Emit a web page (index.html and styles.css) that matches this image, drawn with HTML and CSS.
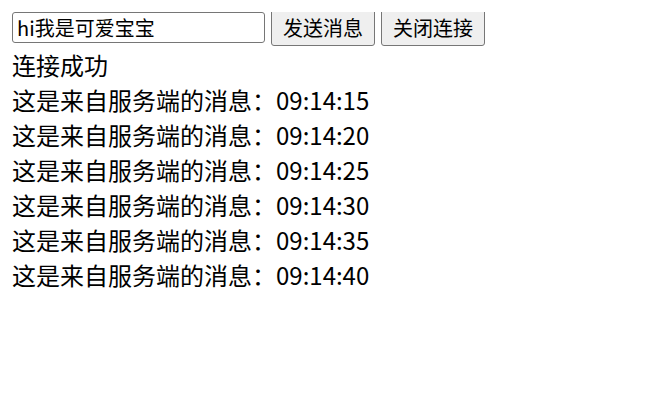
FILE: index.html
```html
<!DOCTYPE html>
<html lang="zh-CN">
<head>
    <meta charset="UTF-8">
    <title>WebSocket</title>
    <link rel="stylesheet" href="styles.css">
</head>
<body>
    <div class="toolbar">
        <input type="text" class="msg-input" id="msgInput" value="hi我是可爱宝宝">
        <button class="btn" id="sendBtn">发送消息</button>
        <button class="btn" id="closeBtn">关闭连接</button>
    </div>
    <div class="log" id="log">
        <div class="log-item">连接成功</div>
        <div class="log-item">这是来自服务端的消息：09:14:15</div>
        <div class="log-item">这是来自服务端的消息：09:14:20</div>
        <div class="log-item">这是来自服务端的消息：09:14:25</div>
        <div class="log-item">这是来自服务端的消息：09:14:30</div>
        <div class="log-item">这是来自服务端的消息：09:14:35</div>
        <div class="log-item">这是来自服务端的消息：09:14:40</div>
    </div>
</body>
</html>
```

FILE: styles.css
```css
body {
    margin: 12px;
    font-family: "Noto Sans CJK SC", "Noto Sans", sans-serif;
    font-size: 24px;
    color: #000;
    background-color: #fff;
}
.toolbar {
    display: flex;
    align-items: center;
    gap: 6px;
    height: 37px;
    margin-top: -3px;
}
.msg-input {
    box-sizing: border-box;
    width: 253px;
    height: 31px;
    margin: 0;
    padding: 0 4px;
    font-family: inherit;
    font-size: 20px;
    border: 1px solid #767676;
    border-radius: 3px;
    background-color: #fff;
    color: #000;
}
.btn {
    box-sizing: border-box;
    height: 37px;
    width: 104px;
    margin: 0;
    padding: 0;
    font-family: inherit;
    font-size: 20px;
    color: #000;
    background-color: #efefef;
    border: 1px solid #767676;
    border-radius: 3px;
}
.log {
    margin-top: 1px;
}
.log-item {
    line-height: 35px;
}
```
